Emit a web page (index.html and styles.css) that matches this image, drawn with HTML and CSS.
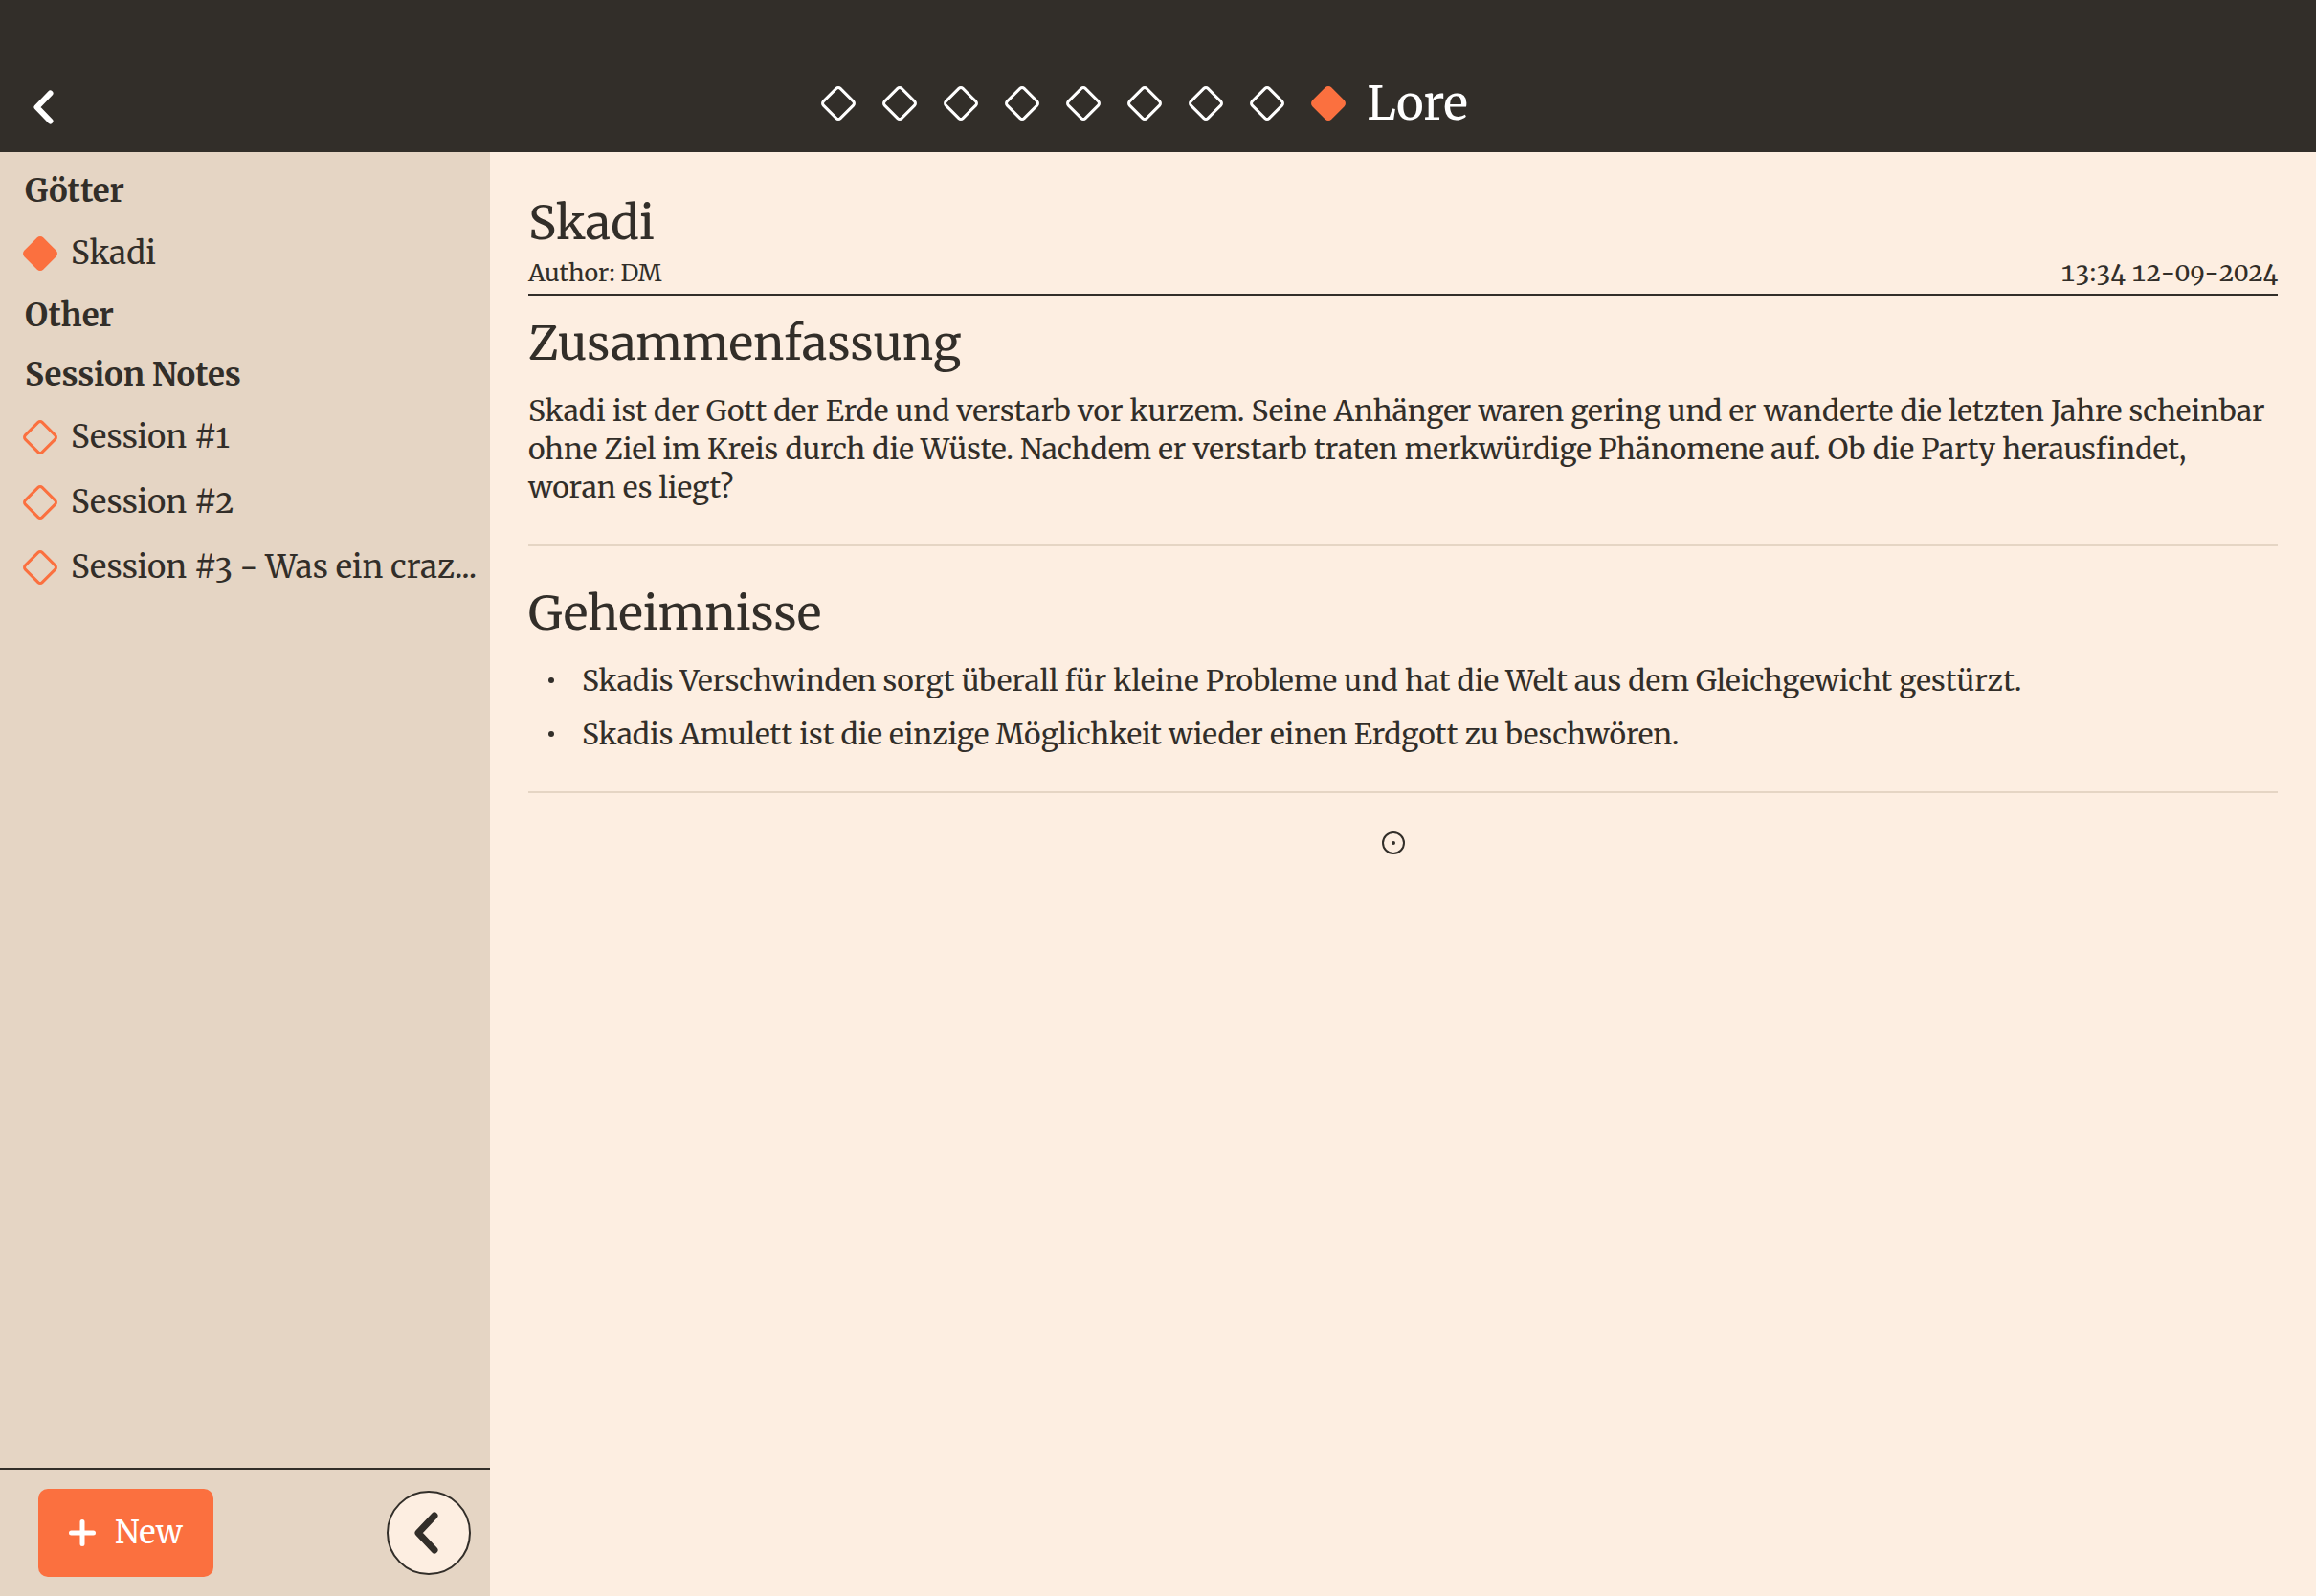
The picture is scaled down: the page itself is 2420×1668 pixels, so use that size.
FILE: index.html
```html
<!DOCTYPE html>
<html lang="de">
<head>
<meta charset="utf-8">
<meta name="viewport" content="width=device-width, initial-scale=1">
<title>Lore</title>
<link rel="stylesheet" href="styles.css">
</head>
<body>
<svg class="defs" aria-hidden="true">
  <symbol id="diamond" viewBox="0 0 36 36"><path d="M15.9 2.4a3 3 0 0 1 4.2 0L33.6 15.9a3 3 0 0 1 0 4.2L20.1 33.6a3 3 0 0 1-4.2 0L2.4 20.1a3 3 0 0 1 0-4.2Z"/></symbol>
</svg>
<header class="topbar">
  <button class="icon-button back" type="button" aria-label="Back">
    <svg class="chevron" viewBox="0 0 22 36"><path d="M18.500 3.500 4.500 18 18.500 32.500"/></svg>
  </button>
  <nav class="steps" aria-label="Sections">
    <a class="step" href="#1" aria-label="Section 1"><svg class="diamond"><use href="#diamond"/></svg></a>
    <a class="step" href="#2" aria-label="Section 2"><svg class="diamond"><use href="#diamond"/></svg></a>
    <a class="step" href="#3" aria-label="Section 3"><svg class="diamond"><use href="#diamond"/></svg></a>
    <a class="step" href="#4" aria-label="Section 4"><svg class="diamond"><use href="#diamond"/></svg></a>
    <a class="step" href="#5" aria-label="Section 5"><svg class="diamond"><use href="#diamond"/></svg></a>
    <a class="step" href="#6" aria-label="Section 6"><svg class="diamond"><use href="#diamond"/></svg></a>
    <a class="step" href="#7" aria-label="Section 7"><svg class="diamond"><use href="#diamond"/></svg></a>
    <a class="step" href="#8" aria-label="Section 8"><svg class="diamond"><use href="#diamond"/></svg></a>
    <a class="step current" href="#lore" aria-current="page"><svg class="diamond filled"><use href="#diamond"/></svg><span class="step-name">Lore</span></a>
  </nav>
</header>
<div class="layout">
  <aside class="sidebar">
    <nav class="notes" aria-label="Notes">
      <h2 class="group">Götter</h2>
      <a class="note" href="#skadi"><svg class="diamond filled"><use href="#diamond"/></svg><span class="note-name">Skadi</span></a>
      <h2 class="group">Other</h2>
      <h2 class="group">Session Notes</h2>
      <a class="note" href="#s1"><svg class="diamond accent"><use href="#diamond"/></svg><span class="note-name">Session #1</span></a>
      <a class="note" href="#s2"><svg class="diamond accent"><use href="#diamond"/></svg><span class="note-name">Session #2</span></a>
      <a class="note" href="#s3"><svg class="diamond accent"><use href="#diamond"/></svg><span class="note-name">Session #3 - Was ein craz...</span></a>
    </nav>
    <div class="actions">
      <button class="new" type="button">
        <svg class="plus" viewBox="0 0 28 28"><path d="M14 2.500V25.500M2.500 14H25.500"/></svg>
        <span>New</span>
      </button>
      <button class="icon-button collapse" type="button" aria-label="Collapse sidebar">
        <svg class="chevron large" viewBox="0 0 26 44"><path d="M22 4 5 22 22 40"/></svg>
      </button>
    </div>
  </aside>
  <main class="article">
    <h1 class="title">Skadi</h1>
    <div class="meta"><span>Author: DM</span><time class="stamp" datetime="2024-09-12T13:34">13:34 12-09-2024</time></div>
    <section class="block">
      <h2 class="title">Zusammenfassung</h2>
      <p class="text">Skadi ist der Gott der Erde und verstarb vor kurzem. Seine Anhänger waren gering und er wanderte die letzten Jahre scheinbar ohne Ziel im Kreis durch die Wüste. Nachdem er verstarb traten merkwürdige Phänomene auf. Ob die Party herausfindet, woran es liegt?</p>
    </section>
    <section class="block secrets">
      <h2 class="title">Geheimnisse</h2>
      <ul class="list">
        <li>Skadis Verschwinden sorgt überall für kleine Probleme und hat die Welt aus dem Gleichgewicht gestürzt.</li>
        <li>Skadis Amulett ist die einzige Möglichkeit wieder einen Erdgott zu beschwören.</li>
      </ul>
    </section>
    <button class="icon-button insert" type="button" aria-label="Insert block">
      <svg class="target" viewBox="0 0 24 24"><circle class="ring" cx="12" cy="12" r="11"/><circle class="dot" cx="12" cy="12" r="2"/></svg>
    </button>
  </main>
</div>
</body>
</html>
```
FILE: styles.css
```css
:root {
  --ink: #322e29;
  --paper: #fdeee1;
  --sand: #e5d5c4;
  --accent: #fb703f;
  --serif: Merriweather, "DejaVu Serif Condensed", "DejaVu Serif", serif;
}

* { box-sizing: border-box; }

body {
  margin: 0;
  min-height: 100vh;
  display: flex;
  flex-direction: column;
  background: var(--paper);
  color: var(--ink);
  font-family: var(--serif);
  font-size: 30px;
  font-variant-numeric: oldstyle-nums;
}

.defs { position: absolute; width: 0; height: 0; }

h1, h2, p, ul { margin: 0; padding: 0; font-weight: inherit; }
a { color: inherit; text-decoration: none; }

button {
  margin: 0;
  padding: 0;
  border: 0;
  background: none;
  color: inherit;
  font: inherit;
}

.icon-button { display: flex; align-items: center; justify-content: center; }

.diamond {
  flex: none;
  display: block;
  width: 36px;
  height: 36px;
  fill: none;
  stroke: currentColor;
  stroke-width: 3;
}
.diamond.accent { stroke: var(--accent); }
.diamond.filled { fill: var(--accent); stroke: var(--accent); }

.chevron {
  width: 22px;
  height: 36px;
  fill: none;
  stroke: currentColor;
  stroke-width: 6;
  stroke-linecap: round;
  stroke-linejoin: round;
}
.chevron.large { width: 26px; height: 44px; stroke-width: 7; }

.topbar {
  display: grid;
  grid-template-columns: 1fr auto 1fr;
  align-items: center;
  padding: 76px 34px 19px;
  background: var(--ink);
  color: #fff;
}
.back { justify-self: start; padding-top: 8px; }

.steps { display: flex; gap: 28px; padding-right: 28px; }
.step { display: flex; align-items: center; gap: 22px; }
.step-name { font-size: 49px; line-height: 64px; }

.layout { flex: 1; display: flex; }

.sidebar {
  flex: none;
  width: 512px;
  display: flex;
  flex-direction: column;
  background: var(--sand);
}

.notes { flex: 1; padding: 10px 0; font-size: 33px; }
.group { padding: 0 26px; font-size: 33px; font-weight: 700; line-height: 62px; }
.note { display: flex; align-items: center; gap: 14px; padding: 0 0 0 24px; line-height: 68px; }
.note-name { overflow: hidden; white-space: nowrap; text-overflow: ellipsis; }

.actions {
  display: flex;
  align-items: center;
  justify-content: space-between;
  padding: 20px 20px 20px 40px;
  border-top: 2px solid var(--ink);
}

.new {
  display: flex;
  align-items: center;
  gap: 20px;
  padding: 0 32px;
  border-radius: 10px;
  background: var(--accent);
  color: #fff;
  font-size: 33px;
  line-height: 92px;
}
.plus {
  width: 28px;
  height: 28px;
  fill: none;
  stroke: currentColor;
  stroke-width: 5;
  stroke-linecap: round;
}

.collapse {
  width: 88px;
  height: 88px;
  padding-right: 6px;
  border: 2px solid var(--ink);
  border-radius: 50%;
  background: var(--paper);
}

.article { flex: 1; min-width: 0; padding: 42px 40px; }

.title { font-size: 49px; line-height: 64px; }

.meta {
  display: flex;
  justify-content: space-between;
  padding: 2px 0 4px;
  border-bottom: 2px solid var(--ink);
  font-size: 25px;
  line-height: 36px;
}
.stamp { font-size: 26px; font-variant-numeric: oldstyle-nums tabular-nums; }

.block { padding: 18px 0 32px; border-bottom: 2px solid var(--sand); }
.block.secrets { padding-top: 38px; }

.text { padding: 18px 12px 8px 0; line-height: 40px; }

.list { padding-top: 10px; list-style: none; line-height: 56px; }
.list li { display: flex; align-items: center; padding-left: 21px; }
.list li::before {
  content: "";
  flex: none;
  width: 6px;
  height: 6px;
  margin-right: 29px;
  border-radius: 50%;
  background: var(--ink);
}

.insert { width: 100%; padding: 40px 20px 40px 0; }
.target { width: 24px; height: 24px; }
.ring { fill: none; stroke: var(--ink); stroke-width: 2; }
.dot { fill: var(--ink); }
```
